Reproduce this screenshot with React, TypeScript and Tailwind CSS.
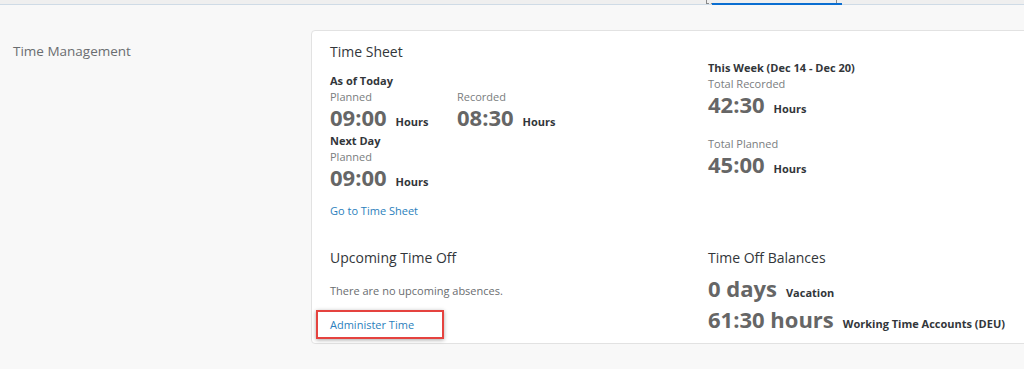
const font = { fontFamily: '"Open Sans", "Liberation Sans", sans-serif' };

function Value({ value, unit }: { value: string; unit: string }) {
  return (
    <div className="flex items-baseline h-[26px]">
      <span className="text-[22px] leading-[26px] font-bold text-[#666666]">{value}</span>
      <span className="ml-[9px] text-[11px] font-bold text-[#32363a]">{unit}</span>
    </div>
  );
}

function Label({ children, bold }: { children: React.ReactNode; bold?: boolean }) {
  return (
    <div
      className={`text-[11px] leading-[14px] ${bold ? "font-bold text-[#32363a]" : "text-[#7a7d80]"}`}
    >
      {children}
    </div>
  );
}

export default function App() {
  return (
    <div className="w-[1024px] h-[369px] overflow-hidden bg-[#f8f8f8]" style={font}>
      {/* shell header strip */}
      <div className="relative h-[5px] bg-[#efefef] border-b border-[#cfdbe6]">
        <div className="absolute left-[706px] top-0 w-[131px] h-[4px] border border-dashed border-[#8a8a8a] border-t-0" />
        <div className="absolute left-[712px] top-[3px] w-[130px] h-[2px] bg-[#0a6ed1]" />
      </div>

      <div className="flex pt-[25px]">
        <div className="w-[311px] shrink-0 pl-[13px] pt-[11px]">
          <div className="text-[13.5px] leading-[20px] text-[#6a6d70]">Time Management</div>
        </div>

        <div className="w-[760px] shrink-0 bg-white border border-[#e2e2e2] rounded-tl-[4px] rounded-bl-[4px] pl-[18px] pt-[11px] pb-[4px]">
          <div className="grid grid-cols-[378px_1fr]">
            <div>
              <div className="text-[14px] leading-[20px] text-[#32363a]">Time Sheet</div>
              <div className="mt-[12px] flex">
                <div className="w-[127px]">
                  <Label bold>As of Today</Label>
                  <div className="mt-[2px]">
                    <Label>Planned</Label>
                  </div>
                  <Value value="09:00" unit="Hours" />
                </div>
                <div className="pt-[16px]">
                  <Label>Recorded</Label>
                  <Value value="08:30" unit="Hours" />
                </div>
              </div>
              <div className="mt-[4px]">
                <Label bold>Next Day</Label>
                <div className="mt-[2px]">
                  <Label>Planned</Label>
                </div>
                <Value value="09:00" unit="Hours" />
              </div>
              <div className="mt-[14px] text-[11px] leading-[14px] text-[#2b7fbd]">Go to Time Sheet</div>
            </div>

            <div className="pt-[19px]">
              <Label bold>This Week (Dec 14 - Dec 20)</Label>
              <div className="mt-[2px]">
                <Label>Total Recorded</Label>
              </div>
              <Value value="42:30" unit="Hours" />
              <div className="mt-[20px]">
                <Label>Total Planned</Label>
              </div>
              <Value value="45:00" unit="Hours" />
            </div>

            <div className="mt-[30px]">
              <div className="text-[14px] leading-[20px] text-[#32363a]">Upcoming Time Off</div>
              <div className="mt-[16px] text-[11px] leading-[14px] text-[#6a6d70]">
                There are no upcoming absences.
              </div>
              <div className="mt-[12px] -ml-[14px] w-[128px] h-[29px] border-2 border-[#e5433f] pl-[12px] pt-[6px] shadow-[0_1px_4px_rgba(0,0,0,0.35)]">
                <div className="text-[11px] leading-[14px] text-[#2b7fbd]">Administer Time</div>
              </div>
            </div>

            <div className="mt-[30px]">
              <div className="text-[14px] leading-[20px] text-[#32363a]">Time Off Balances</div>
              <div className="mt-[7px]">
                <Value value="0 days" unit="Vacation" />
              </div>
              <div className="mt-[5px]">
                <Value value="61:30 hours" unit="Working Time Accounts (DEU)" />
              </div>
            </div>
          </div>
        </div>
      </div>
    </div>
  );
}
